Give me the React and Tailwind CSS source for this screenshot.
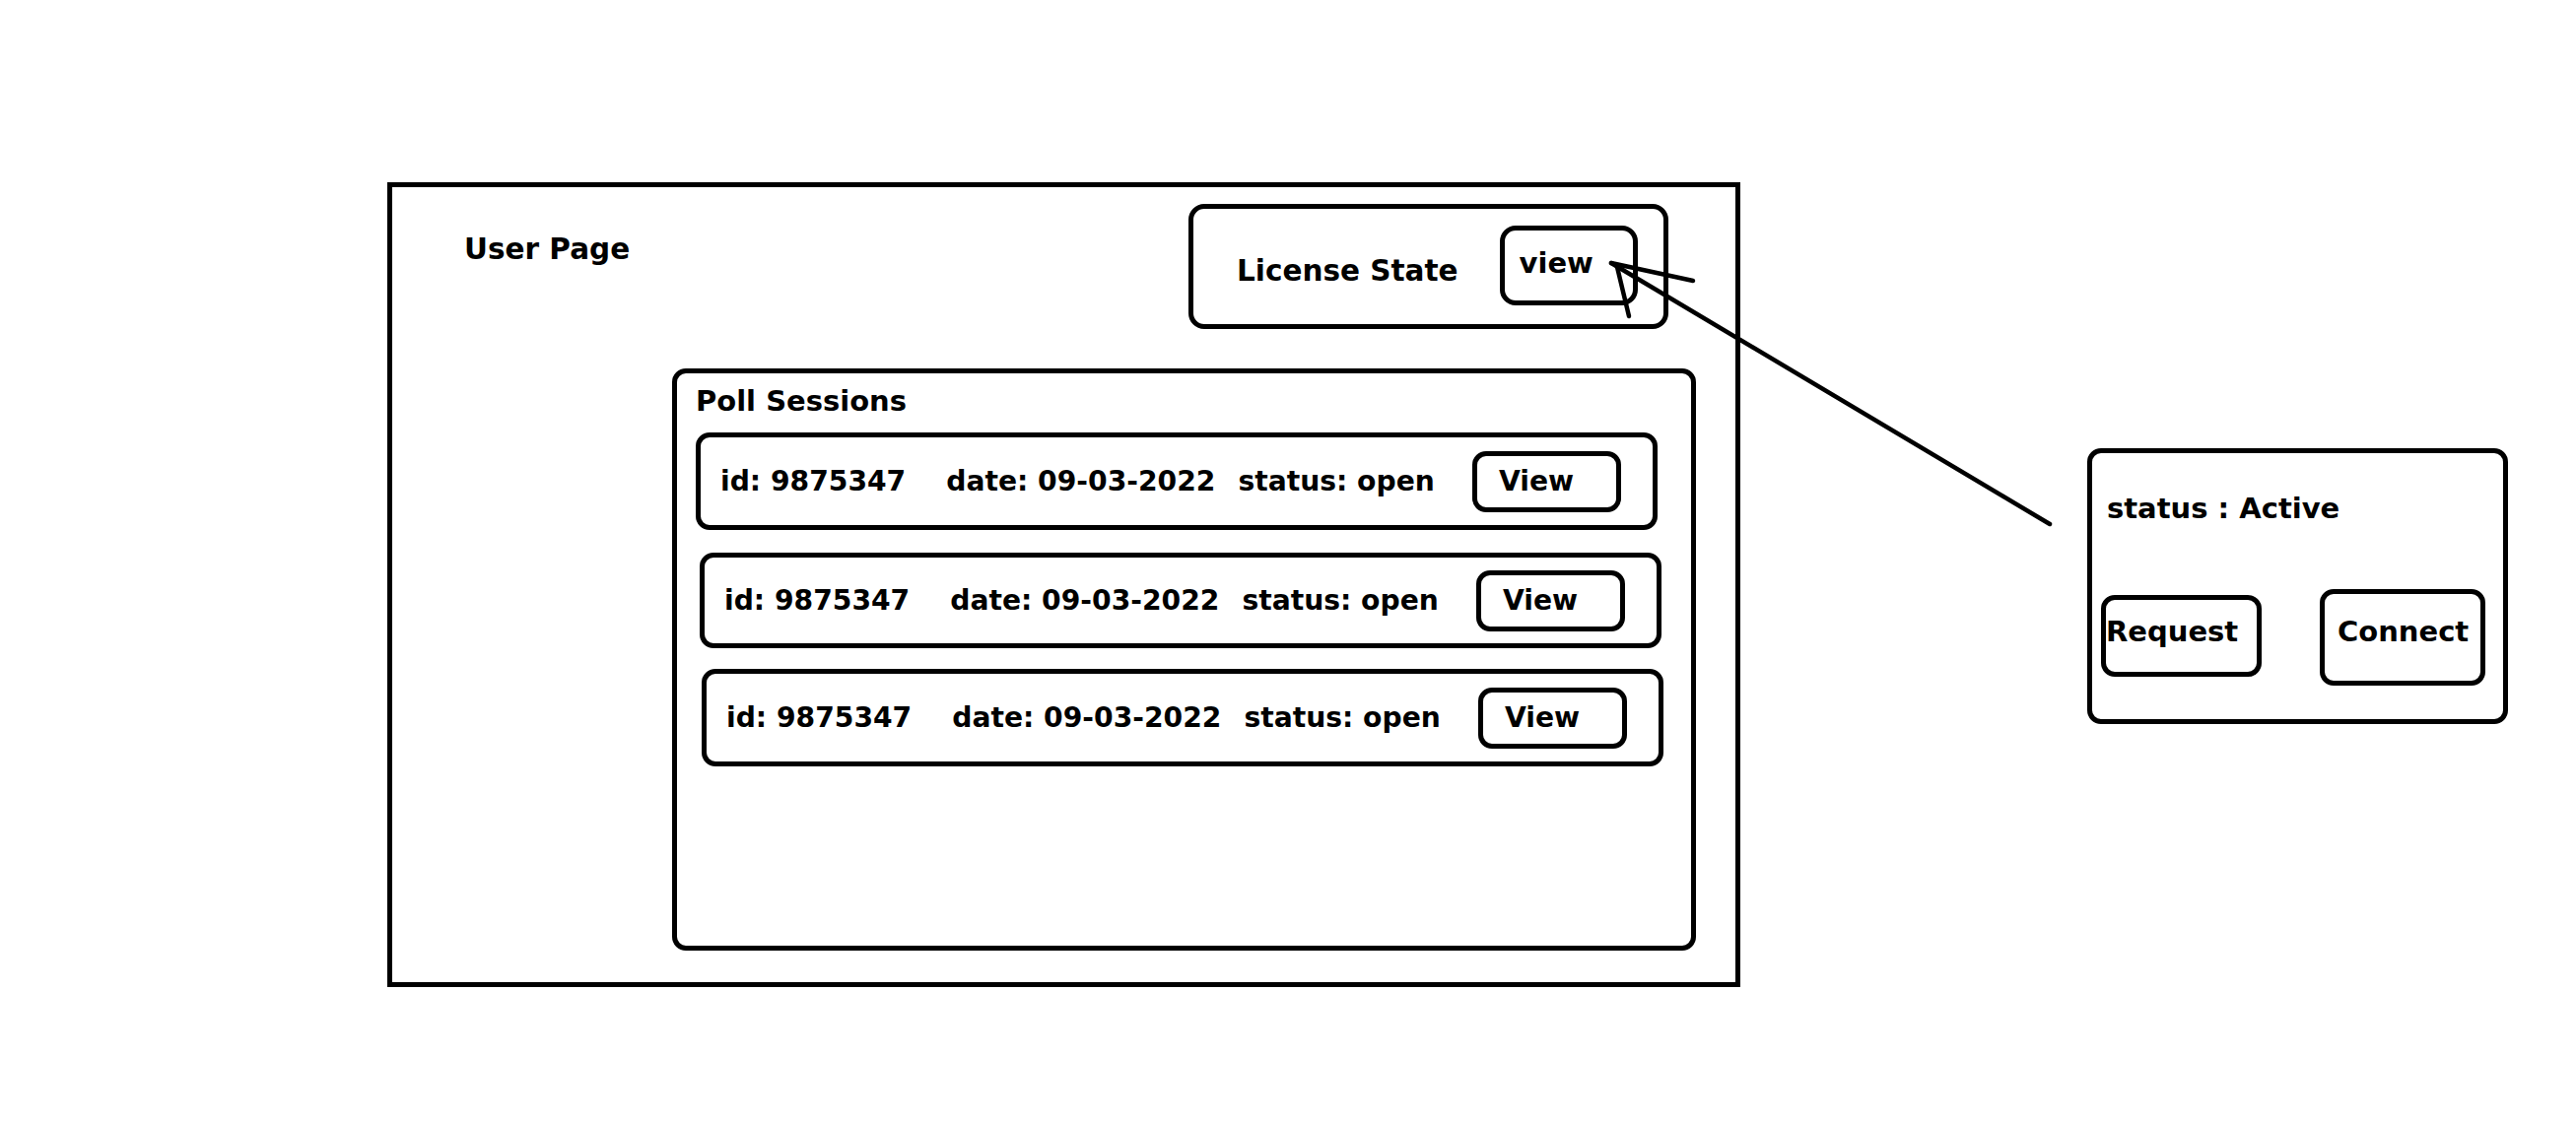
import React from "react";

const font = "font-['DejaVu_Sans',sans-serif] font-bold text-black";

function Row({ ml, h }) {
  return (
    <div
      className={`flex items-center w-[976px] border-[5px] border-black rounded-[14px] pl-[20px] text-[28.2px] leading-[28px] ${ml} ${h}`}
    >
      <span>id: 9875347</span>
      <span className="ml-[41px]">date: 09-03-2022</span>
      <span className="ml-[23px]">status: open</span>
      <div className="ml-auto mr-[32px] w-[151px] h-[62px] border-[5px] border-black rounded-[14px] flex items-center pl-[22px]">
        <span>View</span>
      </div>
    </div>
  );
}

export default function App() {
  return (
    <div className={`relative w-[2614px] h-[1140px] bg-white flex items-start pl-[393px] pt-[185px] ${font}`}>
      {/* Main page box */}
      <div className="w-[1373px] h-[817px] border-[5px] border-black flex flex-col">
        <div className="flex items-start">
          <span className="ml-[73px] mt-[49px] text-[29.5px] leading-[29px]">User Page</span>
          <div className="ml-auto mr-[68px] mt-[17px] w-[487px] h-[127px] border-[5px] border-black rounded-[16px] flex items-start">
            <span className="ml-[44px] mt-[49px] text-[29.5px] leading-[29px]">License State</span>
            <div className="ml-[42px] mt-[17px] w-[140px] h-[81px] border-[5px] border-black rounded-[16px] pl-[15px] pt-[19px]">
              <span className="block text-[29px] leading-[29px]">view</span>
            </div>
          </div>
        </div>
        <div className="ml-[284px] mt-[40px] w-[1039px] h-[591px] border-[5px] border-black rounded-[14px] flex flex-col pt-[14px]">
          <span className="ml-[19px] text-[29px] leading-[29px]">Poll Sessions</span>
          <Row ml="ml-[19px] mt-[17px]" h="h-[99px]" />
          <Row ml="ml-[23px] mt-[23px]" h="h-[97px]" />
          <Row ml="ml-[25px] mt-[21px]" h="h-[99px]" />
        </div>
      </div>

      {/* Side panel */}
      <div className="ml-[352px] mt-[270px] w-[427px] h-[280px] border-[5px] border-black rounded-[14px] flex flex-col text-[29px] leading-[29px]">
        <span className="ml-[15px] mt-[42px]">status : Active</span>
        <div className="flex items-start mt-[67px]">
          <div className="ml-[9px] mt-[6px] w-[163px] h-[83px] border-[5px] border-black rounded-[14px] pl-[0px] pt-[18px]">
            <span className="block">Request</span>
          </div>
          <div className="ml-[59px] w-[168px] h-[98px] border-[5px] border-black rounded-[14px] pl-[13px] pt-[24px]">
            <span className="block">Connect</span>
          </div>
        </div>
      </div>

      {/* Arrow annotation */}
      <svg
        className="absolute left-0 top-0 pointer-events-none"
        width="2614"
        height="1140"
        viewBox="0 0 2614 1140"
      >
        <g stroke="#000" strokeWidth="4.5" strokeLinecap="round" fill="none">
          <line x1="1635" y1="267" x2="2080" y2="532" />
          <line x1="1635" y1="267" x2="1718" y2="285" />
          <line x1="1641" y1="271" x2="1653" y2="321" />
        </g>
      </svg>
    </div>
  );
}
